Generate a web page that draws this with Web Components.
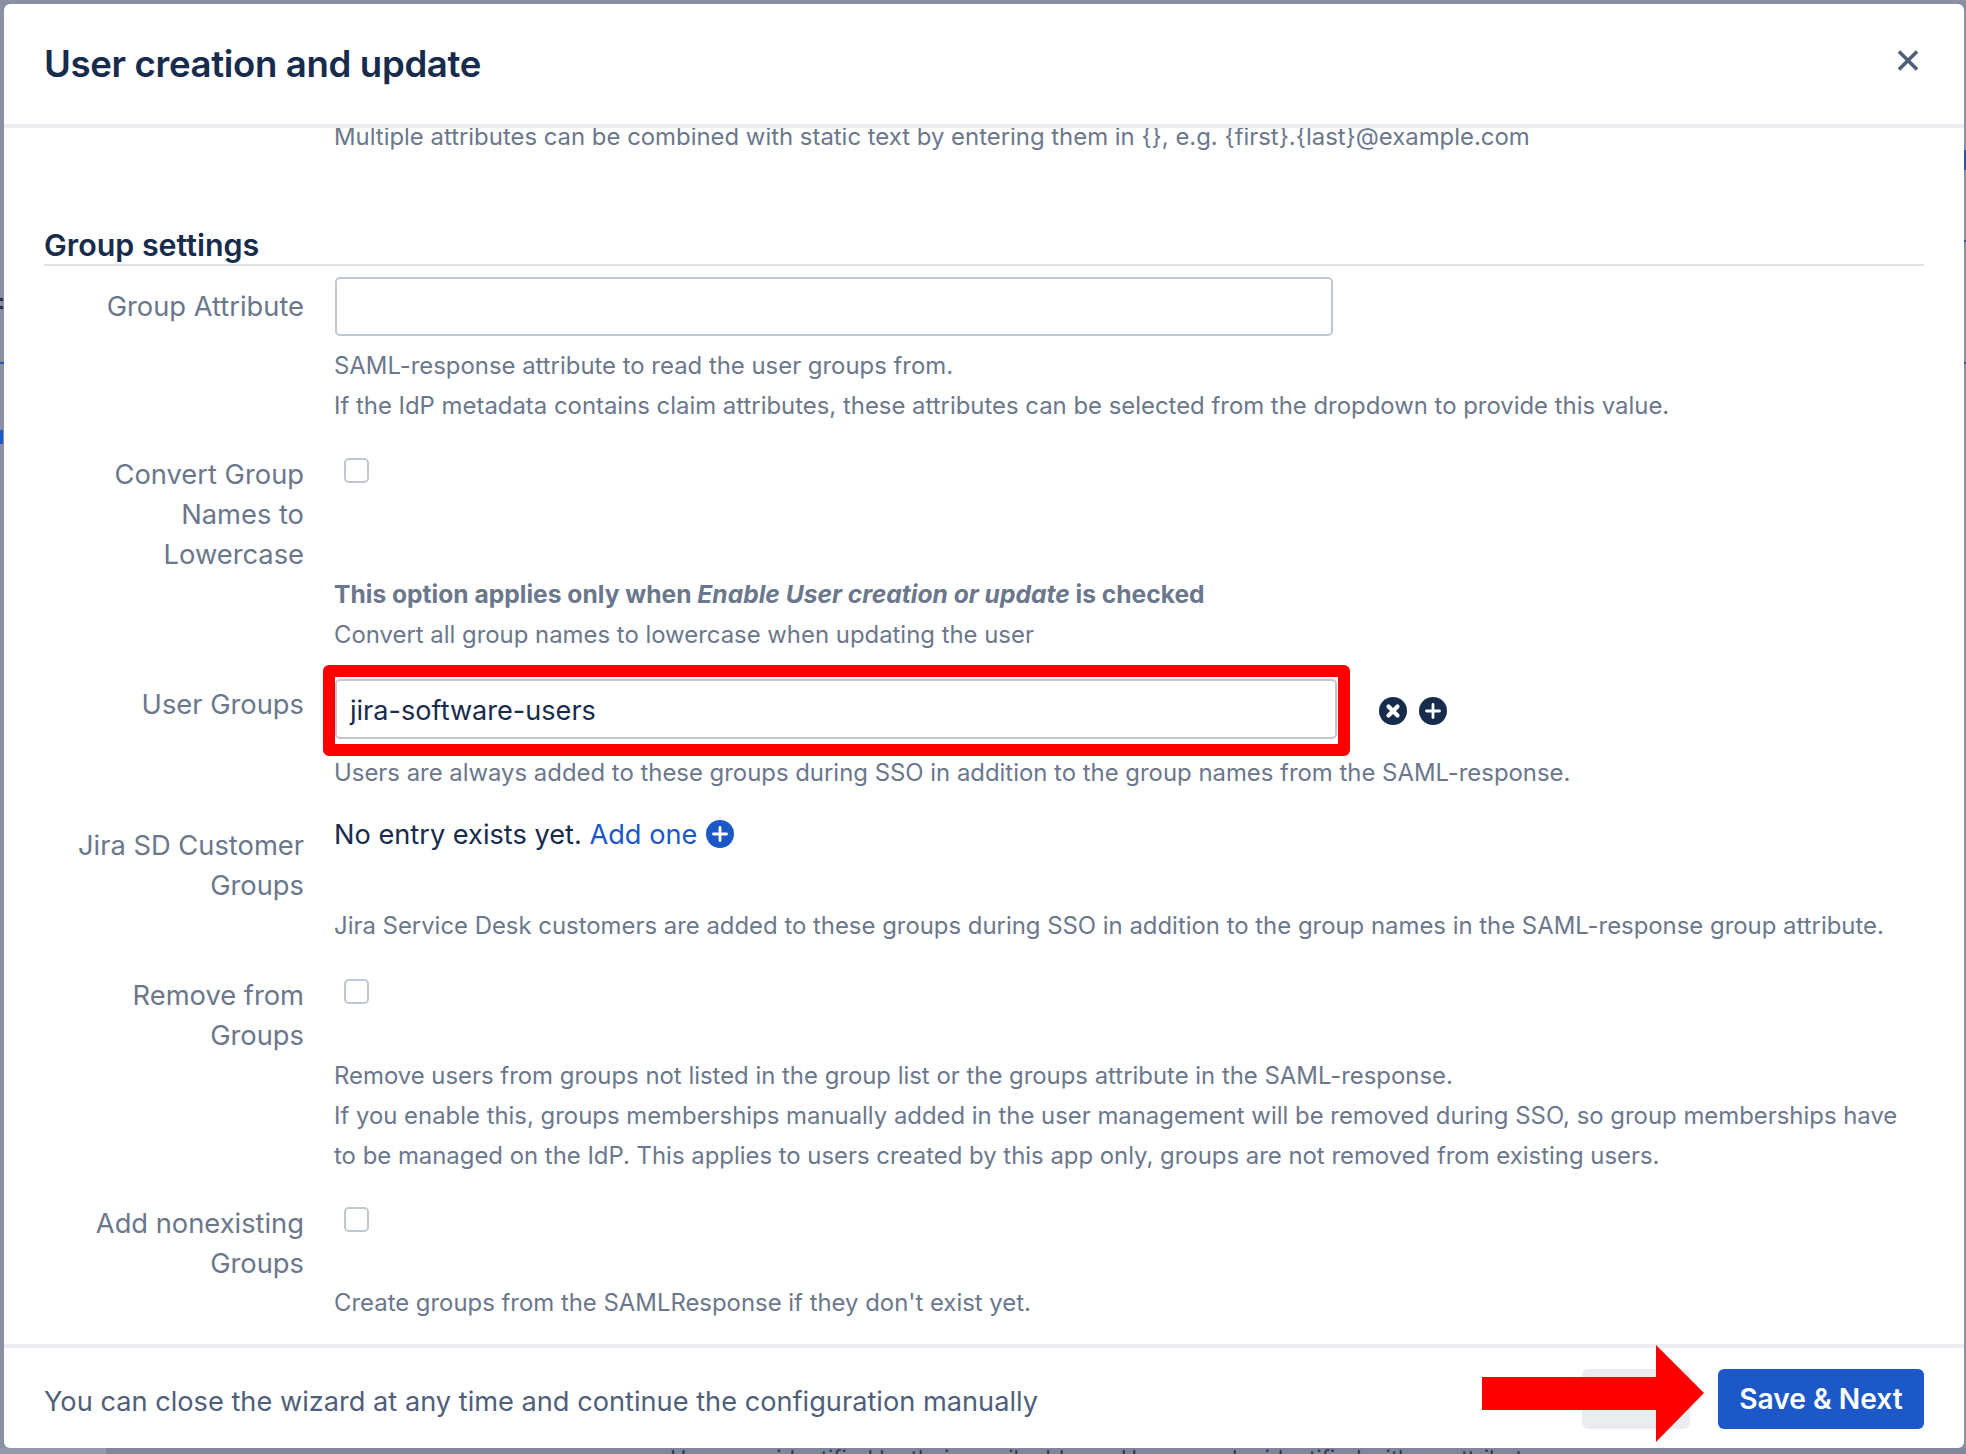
<!DOCTYPE html>
<html lang="en">
<head>
<meta charset="utf-8">
<title>User creation and update</title>
<style>
  html, body { margin: 0; height: 100%; overflow: hidden; }
  body { font-family: Inter, "Noto Sans", "Liberation Sans", sans-serif; background: #8a90a4; }
  a { color: #1c58c7; text-decoration: none; }
  b { font-size: 24.6px; }
</style>
</head>
<body>

<page-backdrop>
  <wizard-dialog>
    <span slot="title">User creation and update</span>

    <help-text style="margin: -11px 0 0 290px">Multiple attributes can be combined with static text by entering them in {}, e.g. {first}.{last}@example.com</help-text>

    <form-section>Group settings</form-section>

    <form-row style="margin-top: 11px; --label-top: 10px; --help-gap: 10px">
      <span slot="label">Group Attribute</span>
      <text-field width="998" style="height: 59px"></text-field>
      <help-text slot="help">SAML-response attribute to read the user groups from.</help-text>
      <help-text slot="help">If the IdP metadata contains claim attributes, these attributes can be selected from the dropdown to provide this value.</help-text>
    </form-row>

    <form-row style="margin-top: 29px; --check-top: 3px; --help-gap: -1px">
      <span slot="label">Convert Group<br>Names to<br>Lowercase</span>
      <check-box></check-box>
      <help-text slot="help"><b>This option applies only when <i>Enable User creation or update</i> is checked</b></help-text>
      <help-text slot="help">Convert all group names to lowercase when updating the user</help-text>
    </form-row>

    <form-row style="margin-top: 24px; --label-top: 6px; --help-gap: 14px">
      <span slot="label">User Groups</span>
      <div style="display: flex; align-items: center">
        <text-field width="1002" value="jira-software-users" highlighted style="padding-top: 2px"></text-field>
        <round-icon kind="remove" color="#172b4d" style="margin: 3px 0 0 42px"></round-icon>
        <round-icon kind="add" color="#172b4d" style="margin: 3px 0 0 12px"></round-icon>
      </div>
      <help-text slot="help">Users are always added to these groups during SSO in addition to the group names from the SAML-response.</help-text>
    </form-row>

    <form-row style="margin-top: 23px; --label-top: 10px">
      <span slot="label">Jira SD Customer<br>Groups</span>
      <div style="display: flex; align-items: center; height: 40px; margin-top: -2px; font-size: 27.2px; color: #172b4d">
        <span>No entry exists yet.&nbsp;<a href="#">Add one</a></span>
        <round-icon kind="add" color="#1c58c7" style="margin-left: 9px"></round-icon>
      </div>
      <help-text slot="help">Jira Service Desk customers are added to these groups during SSO in addition to the group names in the SAML-response group attribute.</help-text>
    </form-row>

    <form-row style="margin-top: 30px; --check-top: 3px">
      <span slot="label">Remove from<br>Groups</span>
      <check-box></check-box>
      <help-text slot="help">Remove users from groups not listed in the group list or the groups attribute in the SAML-response.</help-text>
      <help-text slot="help">If you enable this, groups memberships manually added in the user management will be removed during SSO, so group memberships have to be managed on the IdP. This applies to users created by this app only, groups are not removed from existing users.</help-text>
    </form-row>

    <form-row style="margin-top: 28px; --check-top: 3px; --help-gap: -1px">
      <span slot="label">Add nonexisting<br>Groups</span>
      <check-box></check-box>
      <help-text slot="help">Create groups from the SAMLResponse if they don't exist yet.</help-text>
    </form-row>

    <span slot="footer-text">You can close the wizard at any time and continue the configuration manually</span>
    <wizard-button slot="footer-actions" style="width: 108px"></wizard-button>
    <wizard-button slot="footer-actions" primary style="width: 206px; margin-left: 28px">Save &amp; Next</wizard-button>
  </wizard-dialog>
</page-backdrop>

<script>
class PageBackdrop extends HTMLElement {
  constructor () {
    super()
    this.attachShadow({ mode: 'open' }).innerHTML = `
      <style>
        :host { display: block; position: relative; width: 1966px; height: 1454px; box-sizing: border-box; padding: 4px 2px 6px 4px; overflow: hidden; background: #8a90a4; }
        .page { position: absolute; inset: 0; }
        .page i { position: absolute; display: block; }
        .under { position: absolute; left: 670px; top: 1445px; font-size: 22px; line-height: 26px; color: #2c3a58; white-space: nowrap; }
        ::slotted(*) { position: relative; }
      </style>
      <div class="page">
        <i style="left:0;top:298px;width:3px;height:3px;background:#26324f"></i>
        <i style="left:0;top:306px;width:3px;height:3px;background:#26324f"></i>
        <i style="left:0;top:362px;width:4px;height:2px;background:#2456b0"></i>
        <i style="left:0;top:430px;width:3px;height:14px;background:#1c58c7"></i>
        <i style="left:1964px;top:150px;width:2px;height:20px;background:#2456b0"></i>
        <i style="left:1964px;top:240px;width:2px;height:2px;background:#2456b0"></i>
        <i style="left:1964px;top:362px;width:2px;height:2px;background:#2456b0"></i>
        <i style="left:0;top:1448px;width:106px;height:6px;background:#949aad"></i>
        <i style="left:106px;top:1448px;width:1860px;height:6px;background:#7f879b"></i>
        <div class="under">Users are identified by their email address. Users can be identified with an attribute</div>
      </div>
      <slot></slot>`
  }
}

class WizardDialog extends HTMLElement {
  constructor () {
    super()
    this.attachShadow({ mode: 'open' }).innerHTML = `
      <style>
        :host { display: flex; flex-direction: column; width: 1960px; height: 1444px; background: #fff; border-radius: 6px; overflow: hidden; color: #172b4d; }
        header { flex: none; box-sizing: border-box; border-bottom: 4px solid #ebecf0; height: 124px; display: flex; align-items: flex-start; justify-content: space-between; padding: 0 45px 0 40px; }
        h1 { margin: 40px 0 0; font-size: 36.6px; line-height: 40px; font-weight: 600; letter-spacing: -.35px; }
        button { all: unset; display: block; margin-top: 46px; width: 22px; height: 21px; }
        main { flex: 1; min-height: 0; overflow: hidden; padding: 0 40px 0 40px; }
        footer { flex: none; height: 104px; box-sizing: border-box; border-top: 4px solid #ebecf0; display: flex; align-items: center; justify-content: space-between; padding: 0 40px 0 40px; position: relative; font-size: 27.2px; color: #505f79; }
        .text { margin-top: 6px; }
        .actions { display: flex; align-items: center; margin-top: 1px; }
        .arrow { position: absolute; left: 1478px; top: -3px; width: 222px; height: 97px; }
      </style>
      <header>
        <h1><slot name="title"></slot></h1>
        <button aria-label="Close">
          <svg viewBox="0 0 22 21" width="22" height="21"><path d="M2 1.5 20 19.5M20 1.5 2 19.5" fill="none" stroke="#505f79" stroke-width="3.6"/></svg>
        </button>
      </header>
      <main><slot></slot></main>
      <footer>
        <div class="text"><slot name="footer-text"></slot></div>
        <div class="actions"><slot name="footer-actions"></slot></div>
        <svg class="arrow" viewBox="0 0 222 97"><polygon points="0,32 174,32 174,0 222,48 174,97 174,65 0,65" fill="#f00"/></svg>
      </footer>`
  }
}

class FormSection extends HTMLElement {
  constructor () {
    super()
    this.attachShadow({ mode: 'open' }).innerHTML = `
      <style>
        :host { display: block; margin-top: 69px; height: 38px; border-bottom: 2px solid #dfe1e6; font-size: 30.4px; line-height: 38px; font-weight: 600; color: #172b4d; }
      </style>
      <slot></slot>`
  }
}

class FormRow extends HTMLElement {
  constructor () {
    super()
    this.attachShadow({ mode: 'open' }).innerHTML = `
      <style>
        :host { display: grid; grid-template-columns: 260px 1fr; column-gap: 30px; }
        .label { text-align: right; padding-top: var(--label-top, 0); font-size: 27.3px; line-height: 40px; color: #6b778c; }
        .help { grid-column: 2; margin-top: var(--help-gap, 0); }
      </style>
      <div class="label"><slot name="label"></slot></div>
      <div class="control"><slot></slot></div>
      <div class="help"><slot name="help"></slot></div>`
  }
}

class HelpText extends HTMLElement {
  constructor () {
    super()
    this.attachShadow({ mode: 'open' }).innerHTML = `
      <style>
        :host { display: block; font-size: 23.9px; line-height: 40px; color: #6b778c; }
      </style>
      <slot></slot>`
  }
}

class TextField extends HTMLElement {
  constructor () {
    super()
    this.attachShadow({ mode: 'open' }).innerHTML = `
      <style>
        :host { display: block; position: relative; margin-left: 1px; box-sizing: border-box; height: 60px; border: 2px solid #c1c7d0; border-radius: 5px; background: #fff; padding: 0 13px; font-size: 27.1px; line-height: 56px; color: #172b4d; }
        .mark { display: none; position: absolute; top: -16px; left: -14px; right: -15px; bottom: -19px; border: 12px solid #f00; border-radius: 6px; }
        :host([highlighted]) .mark { display: block; }
      </style>
      <span class="value"></span>
      <div class="mark"></div>`
  }

  connectedCallback () {
    this.style.width = this.getAttribute('width') + 'px'
    this.shadowRoot.querySelector('.value').textContent = this.getAttribute('value') || ''
  }
}

class CheckBox extends HTMLElement {
  constructor () {
    super()
    this.attachShadow({ mode: 'open' }).innerHTML = `
      <style>
        :host { display: block; box-sizing: border-box; width: 25px; height: 25px; margin: var(--check-top, 0) 0 0 10px; border: 2px solid #c1c7d0; border-radius: 5px; background: #fff; }
      </style>`
  }
}

class RoundIcon extends HTMLElement {
  constructor () {
    super()
    this.attachShadow({ mode: 'open' })
  }

  connectedCallback () {
    const color = this.getAttribute('color')
    const mark = this.getAttribute('kind') === 'remove'
      ? '<path d="M9.5 9.5 18.5 18.5M18.5 9.5 9.5 18.5" stroke-width="4.2" stroke-linecap="round"/>'
      : '<path d="M14 7.5V20.5M7.5 14H20.5" stroke-width="2.8" stroke-linecap="round"/>'
    this.shadowRoot.innerHTML = `
      <style>
        :host { display: block; width: 28px; height: 28px; flex: none; }
        svg { display: block; }
      </style>
      <svg viewBox="0 0 28 28" width="28" height="28">
        <circle cx="14" cy="14" r="14" fill="${color}"/>
        <g fill="none" stroke="#fff">${mark}</g>
      </svg>`
  }
}

class WizardButton extends HTMLElement {
  constructor () {
    super()
    this.attachShadow({ mode: 'open' }).innerHTML = `
      <style>
        :host { display: flex; align-items: center; justify-content: center; height: 60px; border-radius: 6px; background: #ebecf0; font-size: 28.2px; font-weight: 600; }
        :host([primary]) { background: #1c58c7; color: #fff; }
      </style>
      <slot></slot>`
  }
}

customElements.define('page-backdrop', PageBackdrop)
customElements.define('wizard-dialog', WizardDialog)
customElements.define('form-section', FormSection)
customElements.define('form-row', FormRow)
customElements.define('help-text', HelpText)
customElements.define('text-field', TextField)
customElements.define('check-box', CheckBox)
customElements.define('round-icon', RoundIcon)
customElements.define('wizard-button', WizardButton)
</script>
</body>
</html>
